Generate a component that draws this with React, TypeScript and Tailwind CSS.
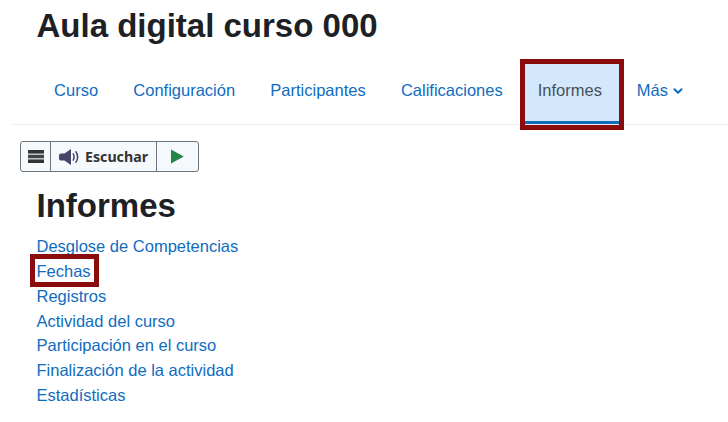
import { ChevronDown } from "lucide-react";

const tabs = ["Curso", "Configuración", "Participantes", "Calificaciones"];
const links = [
  "Desglose de Competencias",
  "Fechas",
  "Registros",
  "Actividad del curso",
  "Participación en el curso",
  "Finalización de la actividad",
  "Estadísticas",
];

function Highlight({ className }: { className: string }) {
  return <span className={`absolute border-[5px] border-[#8a0c0c] pointer-events-none ${className}`} />;
}

function ListenBar() {
  return (
    <div className="flex h-[31px] w-[179px] rounded-[3px] border border-[#6c757d] bg-[#f5f9fc] font-['Noto_Sans',sans-serif] text-[14.2px] font-bold text-[#333]">
      <div className="flex w-[30px] items-center justify-center border-r border-[#6c757d]">
        <svg width="16" height="13" viewBox="0 0 16 13" fill="#333">
          <rect y="0" width="16" height="3.6" />
          <rect y="4.7" width="16" height="3.6" fill="#444" />
          <rect y="9.4" width="16" height="3.6" />
        </svg>
      </div>
      <div className="flex w-[106px] items-center gap-[5px] border-r border-[#6c757d] pl-[8px]">
        <svg width="21" height="16" viewBox="0 0 21 16" fill="#45456b" className="shrink-0">
          <path d="M2 4.4h3.4L12 0v16L5.4 11.6H2a2 2 0 0 1-2-2V6.4a2 2 0 0 1 2-2z" />
          <path d="M14 4.4c1.3 2.3 1.3 4.9 0 7.2M16.6 2.2c2.5 3.5 2.5 8.1 0 11.6" fill="none" stroke="#45456b" strokeWidth="1.5" />
        </svg>
        <span>Escuchar</span>
      </div>
      <div className="flex flex-1 items-center justify-center">
        <svg width="13" height="15" viewBox="0 0 13 15" fill="#26854a">
          <path d="M0 .6v13.8L12.8 7.5z" />
        </svg>
      </div>
    </div>
  );
}

export default function App() {
  return (
    <div className="h-[422px] w-[728px] overflow-hidden bg-white font-['Liberation_Sans',sans-serif] text-[16.5px] text-[#0f6cbf]">
      <h1 className="pl-[36.5px] pt-[6px] text-[33px] leading-[39px] font-bold text-[#1d2125]">
        Aula digital curso 000
      </h1>

      <nav className="ml-[12px] mt-[15px] flex h-[65px] items-center border-b border-[#eeeeee] pl-[24.5px]">
        {tabs.map((t) => (
          <a key={t} className="flex h-full items-center px-[17.6px] pb-[3px]">
            {t}
          </a>
        ))}
        <a className="relative ml-[4.5px] mr-[17px] flex h-[60px] w-[95px] items-center self-end border-b-[3px] border-[#0f6cbf] bg-[#d3e8fd] pb-[5px] pl-[13px] text-[#495057]">
          Informes
          <Highlight className="-left-[5px] -right-[4px] -top-[5px] -bottom-[9px]" />
        </a>
        <a className="flex h-full items-center gap-[3px] pb-[3px]">
          Más
          <ChevronDown size={14} strokeWidth={3.5} />
        </a>
      </nav>

      <div className="ml-[20px] mt-[16px]">
        <ListenBar />
      </div>

      <div className="pl-[36.5px]">
        <h2 className="mt-[14px] text-[33px] leading-[39px] font-bold text-[#1d2125]">Informes</h2>
        <ul className="mt-[9.3px] leading-[24.8px]">
          {links.map((l) => (
            <li key={l}>
              <a className="relative">
                {l}
                {l === "Fechas" && <Highlight className="-left-[7px] -right-[8px] -top-[8px] -bottom-[7px]" />}
              </a>
            </li>
          ))}
        </ul>
      </div>
    </div>
  );
}
